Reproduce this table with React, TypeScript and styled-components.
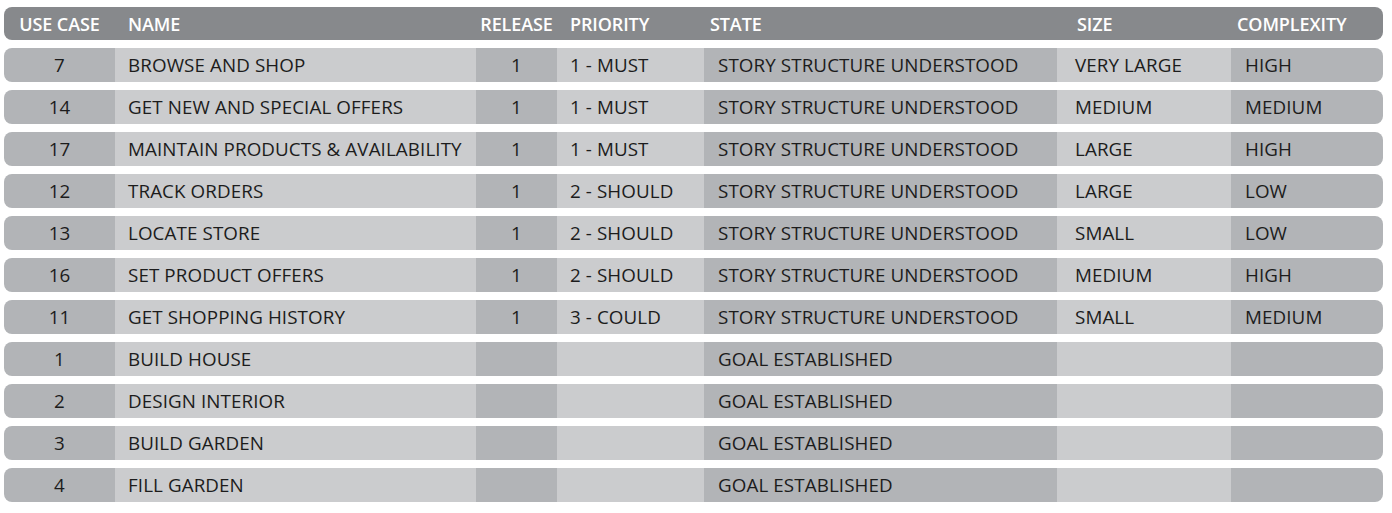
import styled, { createGlobalStyle } from "styled-components";

const GlobalStyle = createGlobalStyle`
  html, body {
    margin: 0;
    padding: 0;
    background: #ffffff;
  }
`;

type Row = {
  id: string;
  name: string;
  release: string;
  priority: string;
  state: string;
  size: string;
  complexity: string;
};

const rows: Row[] = [
  { id: "7", name: "BROWSE AND SHOP", release: "1", priority: "1 - MUST", state: "STORY STRUCTURE UNDERSTOOD", size: "VERY LARGE", complexity: "HIGH" },
  { id: "14", name: "GET NEW AND SPECIAL OFFERS", release: "1", priority: "1 - MUST", state: "STORY STRUCTURE UNDERSTOOD", size: "MEDIUM", complexity: "MEDIUM" },
  { id: "17", name: "MAINTAIN PRODUCTS & AVAILABILITY", release: "1", priority: "1 - MUST", state: "STORY STRUCTURE UNDERSTOOD", size: "LARGE", complexity: "HIGH" },
  { id: "12", name: "TRACK ORDERS", release: "1", priority: "2 - SHOULD", state: "STORY STRUCTURE UNDERSTOOD", size: "LARGE", complexity: "LOW" },
  { id: "13", name: "LOCATE STORE", release: "1", priority: "2 - SHOULD", state: "STORY STRUCTURE UNDERSTOOD", size: "SMALL", complexity: "LOW" },
  { id: "16", name: "SET PRODUCT OFFERS", release: "1", priority: "2 - SHOULD", state: "STORY STRUCTURE UNDERSTOOD", size: "MEDIUM", complexity: "HIGH" },
  { id: "11", name: "GET SHOPPING HISTORY", release: "1", priority: "3 - COULD", state: "STORY STRUCTURE UNDERSTOOD", size: "SMALL", complexity: "MEDIUM" },
  { id: "1", name: "BUILD HOUSE", release: "", priority: "", state: "GOAL ESTABLISHED", size: "", complexity: "" },
  { id: "2", name: "DESIGN INTERIOR", release: "", priority: "", state: "GOAL ESTABLISHED", size: "", complexity: "" },
  { id: "3", name: "BUILD GARDEN", release: "", priority: "", state: "GOAL ESTABLISHED", size: "", complexity: "" },
  { id: "4", name: "FILL GARDEN", release: "", priority: "", state: "GOAL ESTABLISHED", size: "", complexity: "" },
];

const App = () => {
  return (
    <StyledTable>
      <GlobalStyle />
      <StyledHeader>
        <HeadCell $center>USE CASE</HeadCell>
        <HeadCell $pad={13}>NAME</HeadCell>
        <HeadCell $center>RELEASE</HeadCell>
        <HeadCell $pad={13}>PRIORITY</HeadCell>
        <HeadCell $pad={6}>STATE</HeadCell>
        <HeadCell $pad={20}>SIZE</HeadCell>
        <HeadCell $pad={6}>COMPLEXITY</HeadCell>
      </StyledHeader>
      {rows.map((r) => (
        <StyledRow key={r.id}>
          <Cell $dark $center>{r.id}</Cell>
          <Cell $pad={13}>{r.name}</Cell>
          <Cell $dark $center>{r.release}</Cell>
          <Cell $pad={13}>{r.priority}</Cell>
          <Cell $dark $pad={14}>{r.state}</Cell>
          <Cell $pad={18}>{r.size}</Cell>
          <Cell $dark $pad={14}>{r.complexity}</Cell>
        </StyledRow>
      ))}
    </StyledTable>
  );
};

const columns = "111px 361px 81px 147px 353px 174px 152px";

const StyledTable = styled.div`
  display: flex;
  flex-direction: column;
  gap: 8px;
  width: 1379px;
  padding: 7px 0 0 4px;
  font-family: "Open Sans", "Liberation Sans", sans-serif;
`;

const StyledHeader = styled.div`
  display: grid;
  grid-template-columns: ${columns};
  height: 33px;
  border-radius: 8px;
  background: #87898c;
  color: #ffffff;
  font-weight: 600;
  font-size: 18px;
  letter-spacing: -0.1px;
`;

const StyledRow = styled.div`
  display: grid;
  grid-template-columns: ${columns};
  height: 34px;
  border-radius: 8px;
  overflow: hidden;
  color: #1c1c1c;
  font-size: 18.8px;
  letter-spacing: 0.1px;
`;

const HeadCell = styled.div<{ $center?: boolean; $pad?: number }>`
  display: flex;
  align-items: center;
  justify-content: ${(p) => (p.$center ? "center" : "flex-start")};
  padding-left: ${(p) => (p.$center ? 0 : p.$pad ?? 0)}px;
  padding-top: 1px;
  white-space: nowrap;
`;

const Cell = styled.div<{ $dark?: boolean; $center?: boolean; $pad?: number }>`
  display: flex;
  align-items: center;
  justify-content: ${(p) => (p.$center ? "center" : "flex-start")};
  padding-left: ${(p) => (p.$center ? 0 : p.$pad ?? 0)}px;
  background: ${(p) => (p.$dark ? "#b2b4b7" : "#cbccce")};
  white-space: nowrap;
`;

export default App;
